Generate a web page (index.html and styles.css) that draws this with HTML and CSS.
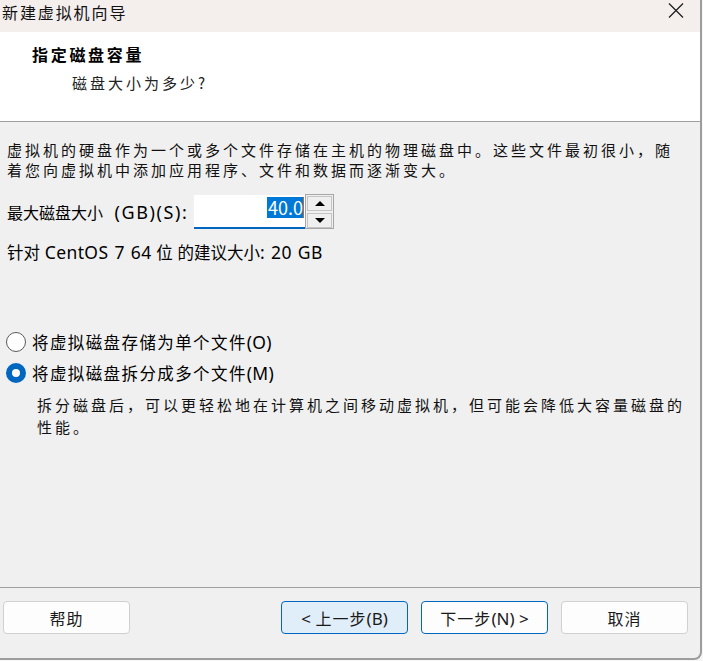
FILE: index.html
```html
<!DOCTYPE html>
<html lang="zh-CN">
<head>
<meta charset="utf-8">
<title>新建虚拟机向导</title>
<link rel="stylesheet" href="styles.css">
</head>
<body>
<div class="window">
  <div class="titlebar">
    <span class="title">新建虚拟机向导</span>
    <svg class="close" width="16" height="15" viewBox="0 0 16 15"><path d="M1 0.5 L15 14.5 M15 0.5 L1 14.5" stroke="#1b1b1b" stroke-width="1.2" fill="none"/></svg>
  </div>
  <div class="header">
    <div class="h-title">指定磁盘容量</div>
    <div class="h-sub">磁盘大小为多少?</div>
  </div>
  <div class="main">
    <p class="para">虚拟机的硬盘作为一个或多个文件存储在主机的物理磁盘中。这些文件最初很小，随<br>着您向虚拟机中添加应用程序、文件和数据而逐渐变大。</p>
    <div class="size-row">
      <span class="size-label">最大磁盘大小 <span class="lat">(GB)(S):</span></span>
      <div class="input"><span class="sel">40.0</span><span class="caret"></span></div>
      <div class="spinner">
        <div class="spin-btn"><span class="tri-up"></span></div>
        <div class="spin-btn"><span class="tri-down"></span></div>
      </div>
    </div>
    <p class="rec">针对 <span class="lat">CentOS 7 64</span> 位 的建议大小<span class="lat">: 20 GB</span></p>
    <div class="radio-row first"><span class="radio"></span><span class="radio-text">将虚拟磁盘存储为单个文件<span class="lat">(O)</span></span></div>
    <div class="radio-row"><span class="radio checked"></span><span class="radio-text">将虚拟磁盘拆分成多个文件<span class="lat">(M)</span></span></div>
    <p class="desc">拆分磁盘后，可以更轻松地在计算机之间移动虚拟机，但可能会降低大容量磁盘的<br>性能。</p>
  </div>
  <div class="footer">
    <button class="btn">帮助</button>
    <div class="nav">
      <button class="btn prev"><span class="lat">&lt;</span> 上一步<span class="lat">(B)</span></button>
      <button class="btn next">下一步<span class="lat">(N) &gt;</span></button>
      <button class="btn">取消</button>
    </div>
  </div>
</div>
</body>
</html>
```

FILE: styles.css
```css
html, body {
  margin: 0;
  padding: 0;
  background: #f6f6f6;
}
body {
  width: 703px;
  height: 661px;
  overflow: hidden;
  font-family: "Noto Sans", "Noto Sans CJK SC", sans-serif;
  color: #000;
}
.window {
  width: 700px;
  height: 658px;
  border-right: 2px solid #9d9d9d;
  border-bottom: 2px solid #9d9d9d;
  border-bottom-right-radius: 8px;
  background: #f0f0f0;
  display: flex;
  flex-direction: column;
  overflow: hidden;
}
.titlebar {
  height: 32px;
  flex: none;
  background: #f4eeed;
  display: flex;
  justify-content: space-between;
  align-items: flex-start;
}
.title {
  font-family: "Noto Sans CJK SC", sans-serif;
  font-size: 16px;
  letter-spacing: 1.9px;
  line-height: 24px;
  padding-left: 2px;
  color: #111;
}
.close {
  margin: 3px 16px 0 0;
}
.header {
  height: 89px;
  flex: none;
  background: #fff;
  border-bottom: 1px solid #a0a0a0;
  font-family: "Noto Sans CJK SC", sans-serif;
}
.h-title {
  margin: 12px 0 0 32px;
  font-size: 16px;
  font-weight: bold;
  letter-spacing: 2.7px;
  line-height: 20px;
}
.h-sub {
  margin: 9px 0 0 72px;
  font-size: 15px;
  letter-spacing: 3px;
  line-height: 20px;
  color: #222;
}
.main {
  flex: 1;
  padding: 18px 0 0 7px;
  font-family: "Noto Sans CJK SC", sans-serif;
}
.para, .desc {
  margin: 0;
  font-size: 15px;
  letter-spacing: 3px;
  line-height: 20px;
  color: #111;
}
.lat {
  font-family: "Noto Sans", sans-serif;
}
.size-row {
  margin-top: 14px;
  display: flex;
  align-items: center;
  height: 35px;
}
.size-label {
  font-size: 16px;
  line-height: 20px;
  width: 187px;
  word-spacing: 8px;
}
.size-label .lat {
  font-size: 18px;
  letter-spacing: 1.6px;
  word-spacing: 0;
}
.input {
  width: 111px;
  height: 32px;
  margin-top: 1px;
  background: #fff;
  border-bottom: 2px solid #0067c0;
  display: flex;
  justify-content: flex-end;
  align-items: flex-start;
}
.sel {
  margin-top: 2px;
  background: #0078d7;
  color: #fff;
  font-size: 18px;
  line-height: 21px;
  padding: 0 0 0 1px;
}
.caret {
  width: 1px;
  height: 21px;
  margin-top: 2px;
  margin-right: 1px;
  background: #c06a2b;
}
.spinner {
  width: 25px;
  height: 33px;
  border: 1px solid #a6a6a6;
  display: flex;
  flex-direction: column;
  gap: 1px;
  padding: 0 1px;
  align-self: flex-start;
}
.spin-btn {
  flex: 1;
  margin-top: 1px;
  background: #efefef;
  border: 1px solid #c4c4c4;
  display: flex;
  align-items: center;
  justify-content: center;
}
.tri-up {
  width: 0;
  height: 0;
  border-left: 5px solid transparent;
  border-right: 5px solid transparent;
  border-bottom: 5px solid #000;
}
.tri-down {
  width: 0;
  height: 0;
  border-left: 5px solid transparent;
  border-right: 5px solid transparent;
  border-top: 5px solid #000;
}
.rec {
  margin: 13px 0 0;
  font-size: 16.5px;
  line-height: 20px;
  word-spacing: 1px;
}
.rec .lat {
  font-size: 17.5px;
  letter-spacing: 0.4px;
}
.radio-row {
  display: flex;
  align-items: center;
  height: 22px;
  margin-top: 9px;
  margin-left: -1px;
}
.radio-row.first {
  margin-top: 69px;
}
.radio {
  width: 18px;
  height: 18px;
  border: 1px solid #5a5a5a;
  border-radius: 50%;
  background: #fff;
  margin-right: 6px;
  flex: none;
}
.radio.checked {
  width: 8px;
  height: 8px;
  border: 6px solid #0067c0;
  background: #fff;
}
.radio-text {
  font-size: 16.5px;
  letter-spacing: 1.4px;
  line-height: 20px;
}
.radio-text .lat {
  font-size: 17.5px;
  letter-spacing: 0.3px;
}
.desc {
  margin: 10px 0 0 30px;
  line-height: 22px;
}
.footer {
  flex: none;
  height: 57px;
  border-top: 1px solid #a0a0a0;
  display: flex;
  justify-content: space-between;
  align-items: flex-start;
  padding: 13px 12px 0 3px;
}
.nav {
  display: flex;
  gap: 13px;
}
.btn {
  width: 127px;
  height: 33px;
  background: #fdfdfd;
  border: 1px solid #d0d0d0;
  border-radius: 4px;
  font-family: "Noto Sans CJK SC", sans-serif;
  font-size: 16px;
  letter-spacing: 1px;
  color: #1a1a1a;
  padding: 0;
}
.btn .lat {
  font-size: 17px;
  letter-spacing: 0;
}
.btn.prev {
  background: #e0eef9;
  border-color: #0067c0;
}
.btn.next {
  border-color: #0067c0;
}
```
